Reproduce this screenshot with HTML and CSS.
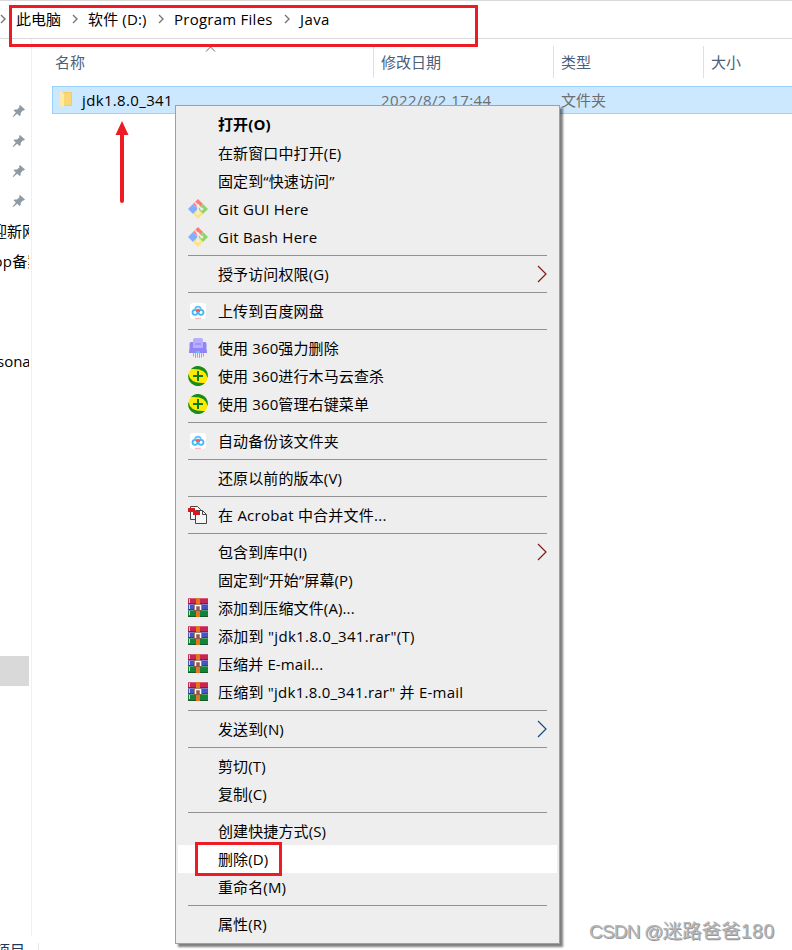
FILE: index.html
```html
<!DOCTYPE html>
<html lang="zh-CN">
<head>
<meta charset="utf-8">
<title>Java</title>
<link rel="stylesheet" href="styles.css">
</head>
<body>
<svg class="defs" aria-hidden="true">
  <symbol id="pin" viewBox="0 0 14 14"><path d="M8 1 13 5.500 11.800 6.600 10.900 6.400 8.800 8.800 8.600 11.200 7.600 12 5.200 9.700 1.300 13 .6 12.400 3.800 8.500 1.500 6.300 2.500 5.500 5 5.400 7.500 3.300 7 2.200Z" fill="#8e9ba5"/></symbol>
  <symbol id="git" viewBox="0 0 20 20">
    <path d="M10 0 15 5 10 10 5 5Z" fill="#ff7b7b"/><path d="M5 5 10 10 5 15 0 10Z" fill="#7fb0ff"/><path d="M15 5 20 10 15 15 10 10Z" fill="#8dd664"/><path d="M10 10 15 15 10 20 5 15Z" fill="#ffe37c"/>
    <path d="M6.800 3.200 10 6.500V14M10.500 7 13.500 10" fill="none" stroke="#eee" stroke-width="1.500"/><circle cx="10" cy="6.700" r="1.500" fill="#eee"/><circle cx="10" cy="14" r="1.800" fill="#eee"/><circle cx="13.800" cy="10" r="1.500" fill="#eee"/>
  </symbol>
  <symbol id="pan" viewBox="0 0 20 20"><rect x="2" y="2" width="16" height="16" rx="3" fill="#fff"/><g fill="none" stroke-width="1.800"><circle cx="7" cy="11.300" r="2.500" stroke="#42b8f5"/><circle cx="13" cy="11.300" r="2.500" stroke="#42b8f5"/><path d="M7.200 8.500a2.800 2.800 0 0 1 5.600 0" stroke="#55c5f6"/><path d="m8 10.500 2-1.800 2 1.800" stroke="#f25668"/></g><path d="M7 17.300h6" stroke="#f7a8b0"/></symbol>
  <symbol id="shred" viewBox="0 0 20 20"><path d="M5 2Q5 0 7 0h6q2 0 2 2v4H5Z" fill="#b8adff"/><path d="M3 4h14q1.500 0 1.500 2v5q.5 1 .5 4H1q0-3 .5-4V6Q1.500 4 3 4Z" fill="#9184f5"/><path d="M5 3h10v7H5Z" fill="#b8adff"/><path d="M7 6h6" stroke="#8b7bee"/><path d="M8 14h4" stroke="#55ceff" stroke-width="1.500"/><path d="M5.500 15v3.500m2-3.500v5m2-5v4.500m2-4.500v5m2-5v4.500m2-4.500v3.500" stroke="#a59aff"/></symbol>
  <symbol id="safe" viewBox="0 0 20 20"><circle cx="10" cy="10" r="9.800" fill="#ffe900"/><path d="M3 3A9.800 9.800 0 0 1 19.500 12Q18 2 3 3ZM17 17A9.800 9.800 0 0 1 .5 8Q2 18 17 17Z" fill="#168d1d"/><path d="M10 5v10M5 10h10" stroke="#087c1c" stroke-width="2"/></symbol>
  <symbol id="acro" viewBox="0 0 20 20"><g fill="#f6f6f6" stroke="#444" stroke-width="1"><path d="M2.500 1.500h7l3 3v10h-10Z"/><path d="M7.500 5.500h7l4 4v9h-11Z"/><path d="M14.500 5.500v4h4" fill="none"/></g><path d="M0 3h7v4H0ZM5 6h7v4H5Z" fill="#d7191f"/></symbol>
  <symbol id="rar" viewBox="0 0 20 19"><path d="M0 0h20v6H0Z" fill="#c72651"/><path d="M0 6h20v6H0Z" fill="#4a52bd"/><path d="M0 12h20v7H0Z" fill="#118439"/><path d="M0 .5h20M0 6.500h20M0 12.500h20" stroke="#fff" stroke-opacity=".25"/><path d="M0 5.500h20M0 11.500h20M0 18.500h20" stroke="#222" stroke-opacity=".45"/><path d="M1.500 1v4m0 2v4m0 2v4" stroke="#eed867"/><path d="M8 0h4v19H8Z" fill="#e5761f"/><path d="M6 6h8v7H6Z" fill="#8b5a4d"/><path d="M7.500 12V7.500h5V12" fill="none" stroke="#fff" stroke-width="1.500"/></symbol>
  <symbol id="next" viewBox="0 0 10 18"><path d="m1 1 8 8-8 8" fill="none" stroke="currentColor" stroke-width="1.200"/></symbol>
  <symbol id="crumb" viewBox="0 0 6 10"><path d="m1 1 4 4-4 4" fill="none" stroke="#777" stroke-width="1.400"/></symbol>
</svg>
<div class="window">
  <nav class="address">
    <svg class="crumb first"><use href="#crumb"/></svg><span class="c1">此电脑</span>
    <svg class="crumb"><use href="#crumb"/></svg><span class="c2">软件 (D:)</span>
    <svg class="crumb"><use href="#crumb"/></svg><span class="c3">Program Files</span>
    <svg class="crumb"><use href="#crumb"/></svg><span class="c4">Java</span>
  </nav>
  <div class="content">
    <aside class="sidebar">
      <div class="side-row"><svg><use href="#pin"/></svg></div>
      <div class="side-row"><svg><use href="#pin"/></svg></div>
      <div class="side-row"><svg><use href="#pin"/></svg></div>
      <div class="side-row"><svg><use href="#pin"/></svg></div>
      <div class="side-row pull-a">迎新网</div>
      <div class="side-row pull-b">op备案</div>
      <div class="side-row account pull-c">sonal</div>
      <div class="side-row selected"></div>
    </aside>
    <main class="files">
      <div class="columns heads">
        <div>名称<svg class="sort" viewBox="0 0 10 6"><path d="m.5 5.500 4.500-4.500 4.500 4.500" fill="none" stroke="#666"/></svg></div><div>修改日期</div><div>类型</div><div>大小</div>
      </div>
      <div class="columns file">
        <div><svg class="folder" viewBox="0 0 12 17"><path d="M3 1h9v14H3Z" fill="#f3cb62"/><path d="M0 0 4 2.500V17L0 15Z" fill="#ffe9a6"/><path d="M4 2h7v12H4Z" fill="#f8d775"/></svg><span class="name">jdk1.8.0_341</span></div><div class="date">2022/8/2 17:44</div><div>文件夹</div><div></div>
      </div>
    </main>
  </div>
  <footer class="status"><span>项目</span></footer>
</div>

<div class="menu">
  <div class="item strong"><i></i><span>打开(O)</span></div>
  <div class="item"><i></i><span>在新窗口中打开(E)</span></div>
  <div class="item"><i></i><span>固定到“快速访问”</span></div>
  <div class="item"><svg><use href="#git"/></svg><span class="latin">Git GUI Here</span></div>
  <div class="item"><svg><use href="#git"/></svg><span class="latin">Git Bash Here</span></div>
  <hr>
  <div class="item"><i></i><span>授予访问权限(G)</span><svg class="next red"><use href="#next"/></svg></div>
  <hr>
  <div class="item"><svg><use href="#pan"/></svg><span>上传到百度网盘</span></div>
  <hr>
  <div class="item"><svg><use href="#shred"/></svg><span>使用 360强力删除</span></div>
  <div class="item"><svg><use href="#safe"/></svg><span>使用 360进行木马云查杀</span></div>
  <div class="item"><svg><use href="#safe"/></svg><span>使用 360管理右键菜单</span></div>
  <hr>
  <div class="item"><svg><use href="#pan"/></svg><span>自动备份该文件夹</span></div>
  <hr>
  <div class="item"><i></i><span>还原以前的版本(V)</span></div>
  <hr>
  <div class="item"><svg><use href="#acro"/></svg><span class="latin">在 Acrobat 中合并文件...</span></div>
  <hr>
  <div class="item"><i></i><span>包含到库中(I)</span><svg class="next red"><use href="#next"/></svg></div>
  <div class="item"><i></i><span>固定到“开始”屏幕(P)</span></div>
  <div class="item rar"><svg><use href="#rar"/></svg><span>添加到压缩文件(A)...</span></div>
  <div class="item rar"><svg><use href="#rar"/></svg><span class="wide">添加到 "jdk1.8.0_341.rar"(T)</span></div>
  <div class="item rar"><svg><use href="#rar"/></svg><span>压缩并 E-mail...</span></div>
  <div class="item rar"><svg><use href="#rar"/></svg><span class="latin">压缩到 "jdk1.8.0_341.rar" 并 E-mail</span></div>
  <hr>
  <div class="item"><i></i><span>发送到(N)</span><svg class="next blue"><use href="#next"/></svg></div>
  <hr>
  <div class="item"><i></i><span>剪切(T)</span></div>
  <div class="item"><i></i><span>复制(C)</span></div>
  <hr>
  <div class="item"><i></i><span>创建快捷方式(S)</span></div>
  <div class="item active"><i></i><span>删除(D)</span></div>
  <div class="item"><i></i><span>重命名(M)</span></div>
  <hr>
  <div class="item"><i></i><span>属性(R)</span></div>
</div>
<div class="mark mark-path"></div>
<div class="mark mark-delete"></div>
<svg class="arrow" viewBox="0 0 14 83"><path d="M7 0 13.500 14H9v66a2 2 0 0 1-4 0V14H.5Z" fill="#ed1c24"/></svg>
<div class="watermark"><span class="site">CSDN @</span>迷路爸爸<span class="num">180</span></div>
</body>
</html>
```
FILE: styles.css
```css
* { box-sizing: border-box; }
body {
  margin: 0;
  width: 792px;
  height: 950px;
  overflow: hidden;
  position: relative;
  background: #fff;
  color: #000;
  font: 15px/28px "Open Sans", "Noto Sans CJK SC", sans-serif;
  white-space: nowrap;
}
.defs { position: absolute; width: 0; height: 0; }
.window { height: 950px; display: flex; flex-direction: column; }
.address {
  height: 39px;
  border-top: 1px solid #d9d9d9;
  border-bottom: 1px solid #d9d9d9;
  display: flex;
  align-items: flex-start;
  padding-top: 4px;
}
.crumb { width: 6px; height: 10px; margin: 9px 10px 0 10px; flex: none; }
.crumb.first { margin-left: 0; }
.address span { flex: none; }
.c1 { width: 46px; }
.c2 { width: 60px; letter-spacing: .15px; }
.c3 { width: 100px; letter-spacing: .25px; }
.c4 { letter-spacing: .4px; }
.content { height: 897px; display: flex; }
.sidebar {
  width: 32px;
  padding: 57px 2px 0 0;
  border-right: 1px solid #f0f0f0;
  flex: none;
}
.side-row { height: 30px; line-height: 30px; overflow: hidden; width: 29px; }
.side-row svg { display: block; width: 14px; height: 14px; margin: 8px 0 0 12px; }
.pull-a { text-indent: -8px; }
.pull-b { text-indent: -6.6px; letter-spacing: .3px; }
.pull-c { text-indent: -3px; }
.account { margin-top: 70px; }
.selected { margin-top: 280px; background: #d9d9d9; }
.files { flex: 1; padding: 7px 0 0 20px; }
.columns { display: grid; grid-template-columns: 322px 180px 150px 1fr; }
.heads { height: 32px; line-height: 32px; color: #4c607a; }
.heads > div { border-right: 1px solid #e0e0e0; padding-left: 7px; position: relative; }
.heads > div:first-child { padding-left: 3px; }
.heads > div:last-child { border: 0; }
.sort { position: absolute; left: 153px; top: 0; width: 11px; height: 6px; }
.heads + .file { margin-top: 8px; }
.file { height: 28px; line-height: 27px; background: #cce8ff; border: 1px solid #99d1ff; border-right: 0; color: #6d6d6d; }
.file > div { padding-left: 7px; }
.file > div:first-child { display: flex; width: 320px; }
.folder { width: 12px; height: 17px; margin-top: 4px; }
.name { margin-left: 10px; color: #000; letter-spacing: .35px; }
.date { letter-spacing: .42px; }
.file > div:nth-child(n+2) { margin-left: -1px; }
.status { height: 14px; padding-top: 7px; display: flex; color: #1e395b; overflow: hidden; }
.status span { width: 39px; height: 7px; line-height: 15px; text-indent: -5px; border-right: 1px solid #e7e7e7; }

.menu {
  position: absolute;
  left: 175px;
  top: 105px;
  width: 385px;
  height: 839px;
  padding: 5px 2px;
  background: #eee;
  border: 1px solid #a0a0a0;
  box-shadow: 3px 3px 2px rgba(0, 0, 0, .5);
}
.item { height: 28px; padding: 0 9px 0 10px; display: flex; align-items: center; }
.item span { letter-spacing: .12px; }
.item .latin { letter-spacing: .24px; }
.item .wide { letter-spacing: .3px; }
.item i, .item > svg:first-child { width: 20px; height: 20px; margin-right: 10px; flex: none; }
.item.rar > svg:first-child { height: 19px; margin-bottom: 1px; }
.item .next { width: 10px; height: 18px; margin-left: auto; margin-right: 1px; color: #111; }
.item .red { color: #7c1c1c; }
.item .blue { color: #154a83; }
.strong { font-weight: 700; line-height: 26px; padding-bottom: 2px; }
.active { background: #fff; }
hr { border: 0; height: 1px; margin: 4px 10px; background: #919191; }

.mark { position: absolute; border: 3px solid #ed1c24; }
.mark-path { left: 9px; top: 5px; width: 469px; height: 42px; }
.mark-delete { left: 195px; top: 842px; width: 87px; height: 34px; }
.arrow { position: absolute; left: 115px; top: 121px; width: 14px; height: 83px; }
.watermark {
  position: absolute;
  left: 589px;
  top: 917px;
  font: 19.500px/28px "Liberation Sans", "Noto Sans CJK SC", sans-serif;
  color: #b5b5b5;
  text-shadow: 1px 1px 0 #999;
}
.site { font-size: 19px; letter-spacing: -.8px; }
.num { letter-spacing: .5px; }
```
